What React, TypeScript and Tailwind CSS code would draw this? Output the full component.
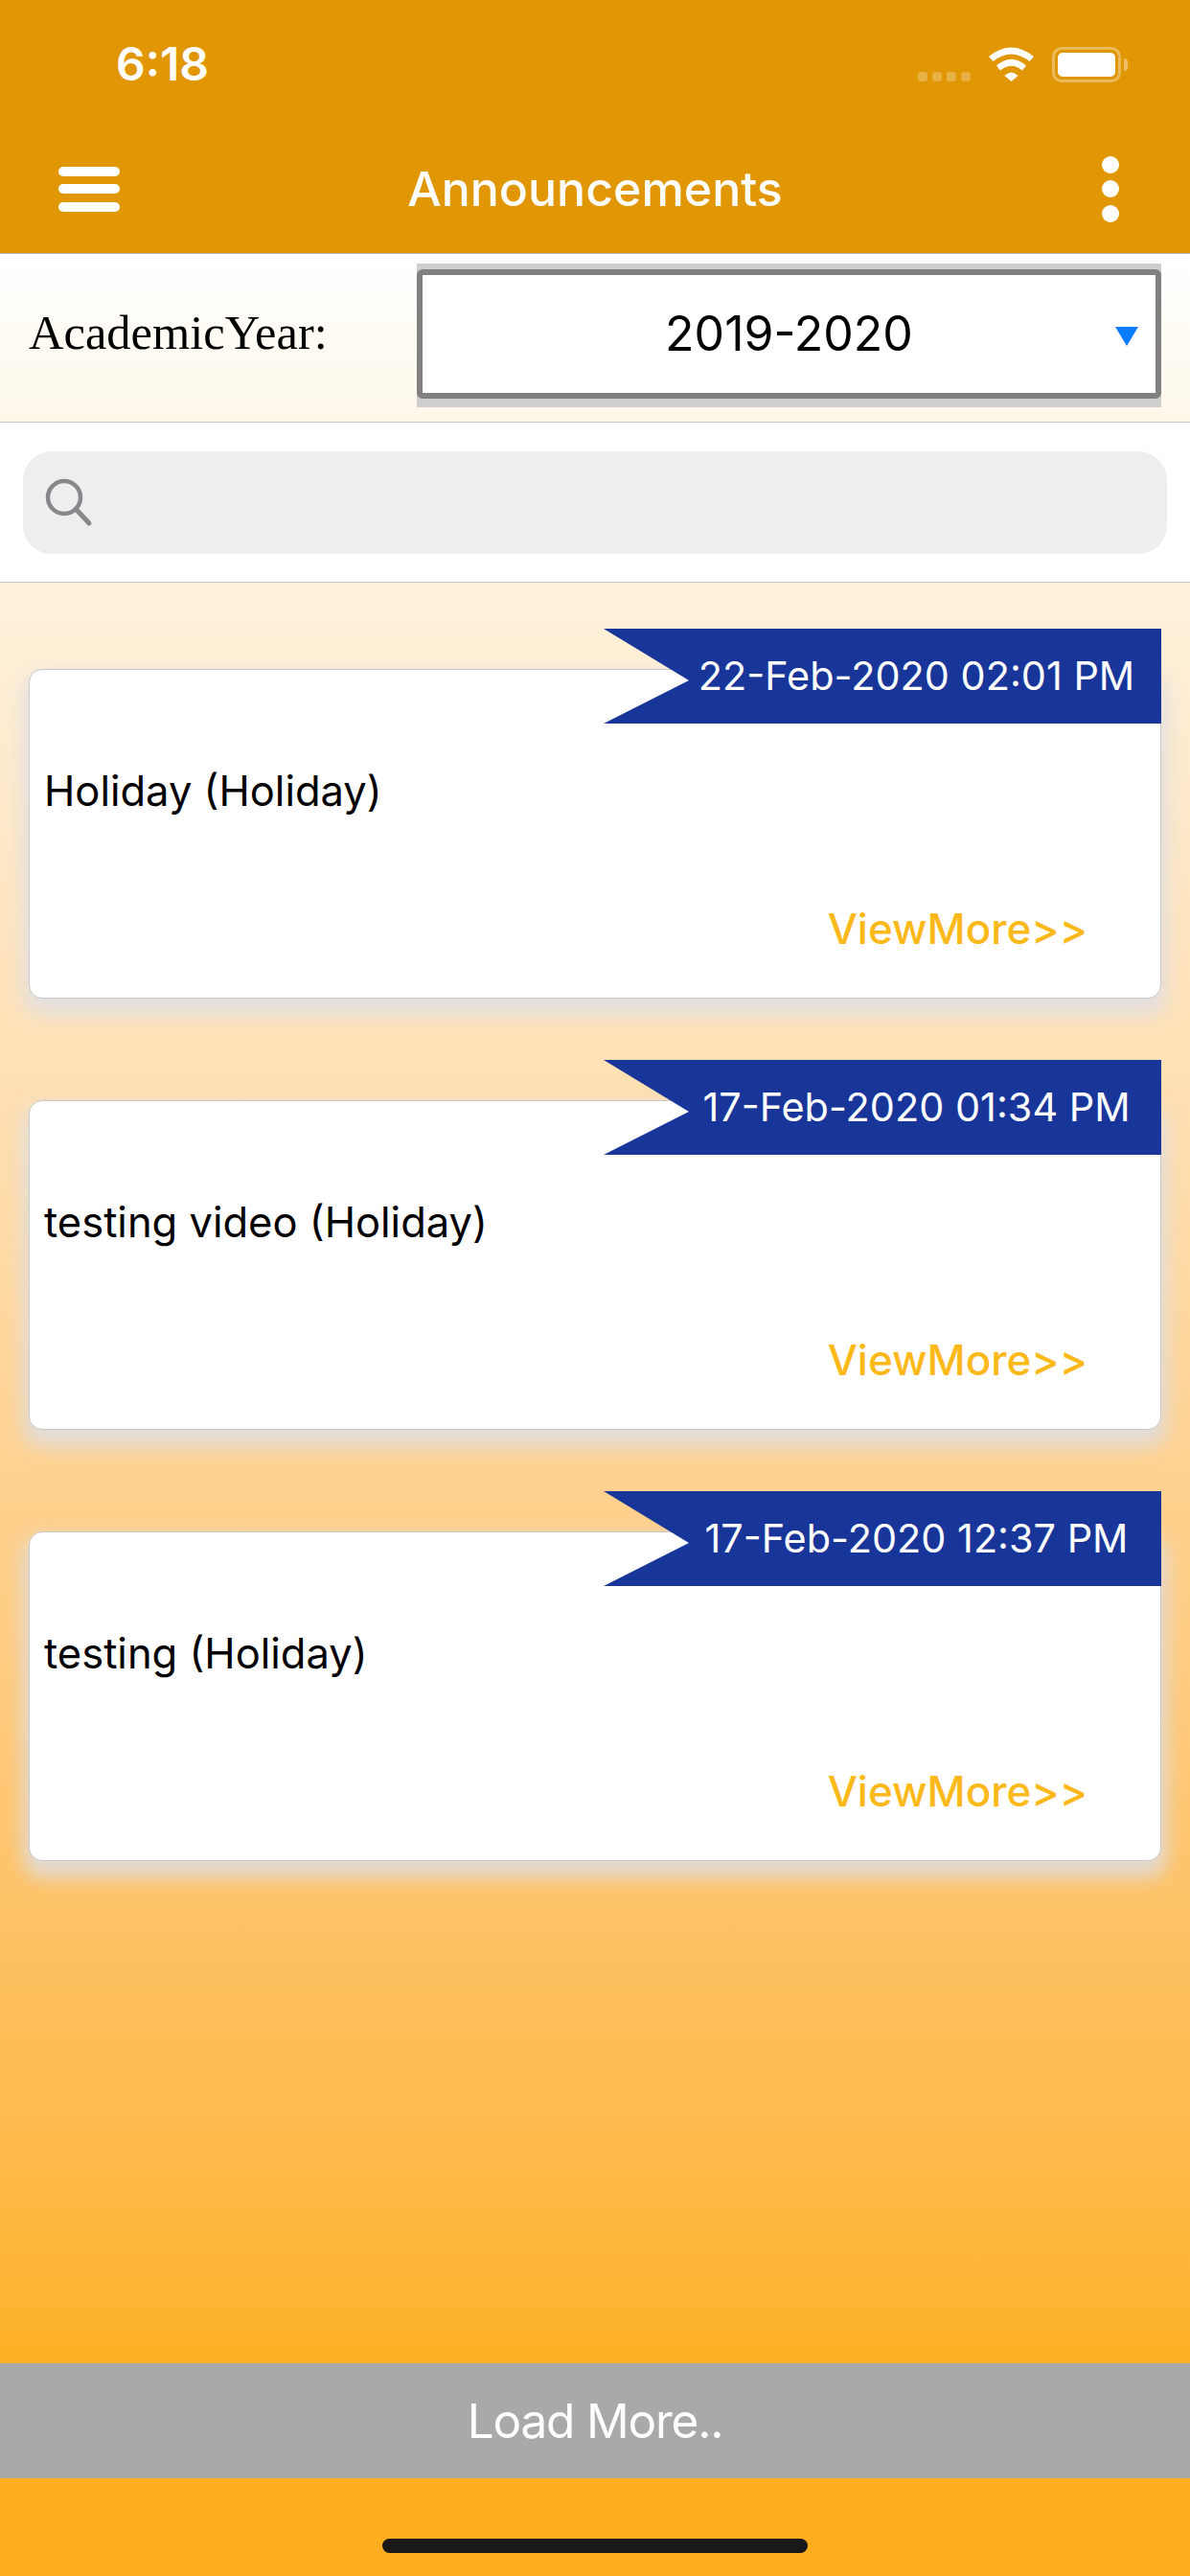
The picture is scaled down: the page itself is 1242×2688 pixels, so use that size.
import React from "react";

const items = [
  { date: "22-Feb-2020 02:01 PM", title: "Holiday (Holiday)" },
  { date: "17-Feb-2020 01:34 PM", title: "testing video (Holiday)" },
  { date: "17-Feb-2020 12:37 PM", title: "testing (Holiday)" },
];

function StatusIcons() {
  return (
    <div className="flex items-start">
      <div className="flex gap-[5px] mt-[26px] mr-[19px]">
        {[0, 1, 2, 3].map((i) => (
          <div key={i} className="w-[10px] h-[10px] rounded-[3px] bg-white/25" />
        ))}
      </div>
      <svg width="47" height="36" viewBox="0 0 47 36" className="mr-[19px]">
        <path d="M0 10 Q23.5 -9 47 10 L42.5 15 Q23.5 0 4.5 15 Z" fill="#fff" />
        <path d="M8 19.5 Q23.5 6 39 19.5 L35 24.5 Q23.5 15 12 24.5 Z" fill="#fff" />
        <path d="M16.5 30 Q23.5 23 30.5 30 L23.5 36 Z" fill="#fff" />
      </svg>
      <div className="w-[72px] h-[37px] rounded-[10px] border-[3px] border-white/35 p-[3px] flex">
        <div className="flex-1 rounded-[5px] bg-white" />
      </div>
      <div className="w-[4px] h-[13px] mt-[12px] ml-[3px] rounded-r-full bg-white/40" />
    </div>
  );
}

function Card({ date, title }: { date: string; title: string }) {
  return (
    <div className="relative mb-[106px] h-[344px] rounded-[14px] border border-[#c9c9c9] bg-white shadow-[0_12px_20px_6px_rgba(222,222,228,0.85)]">
      <div className="absolute top-[-43px] right-[-1px] w-[582px] h-[99px]">
        <svg width="582" height="99" viewBox="0 0 582 99" className="absolute inset-0">
          <polygon points="0,0 582,0 582,99 0,99 89,54" fill="#18359a" />
        </svg>
        <div className="absolute inset-y-0 left-[89px] right-0 flex items-center justify-center pr-[18px] text-[41.4px] text-white">
          {date}
        </div>
      </div>
      <p className="pt-[96px] pl-[15px] text-[43.5px] leading-[60px] text-black">{title}</p>
      <p className="absolute right-[76px] bottom-[46px] text-[44px] leading-[52px] font-medium text-[#fdb91a]">
        ViewMore&gt;&gt;
      </p>
    </div>
  );
}

export default function App() {
  return (
    <div className="w-[1242px] h-[2688px] flex flex-col overflow-hidden font-['Inter',sans-serif]">
      <header className="h-[265px] shrink-0 bg-[#e19704] border-b border-[#b8b8b8] flex flex-col">
        <div className="h-[124px] flex items-start justify-between pt-[49px] pl-[121px] pr-[65px]">
          <span className="text-[48px] leading-[36px] font-semibold text-white">6:18</span>
          <StatusIcons />
        </div>
        <div className="flex-1 grid grid-cols-[1fr_auto_1fr] items-center px-[61px] pt-[6px]">
          <div className="flex flex-col gap-[8.5px] w-[64px]">
            <div className="h-[10px] rounded-full bg-white" />
            <div className="h-[10px] rounded-full bg-white" />
            <div className="h-[10px] rounded-full bg-white" />
          </div>
          <h1 className="text-[50px] font-medium text-white">Announcements</h1>
          <div className="flex flex-col gap-[7.5px] w-[18px] mr-[13px] justify-self-end">
            <div className="h-[18px] rounded-full bg-white" />
            <div className="h-[18px] rounded-full bg-white" />
            <div className="h-[18px] rounded-full bg-white" />
          </div>
        </div>
      </header>

      <div className="h-[176px] shrink-0 flex items-center justify-between pl-[30px] pr-[30px] pb-[5px] bg-gradient-to-b from-white to-[#fef8ea] border-b border-[#c9c4bb]">
        <span className="font-['Liberation_Serif',serif] text-[50.5px] text-black mt-[-4px]">AcademicYear:</span>
        <div className="w-[777px] h-[150px] pt-[6px] bg-[#cfcfcf]">
          <div className="relative h-[135px] rounded-[6px] border-[6px] border-[#808080] bg-white flex items-center justify-center">
            <span className="text-[50px] text-black">2019-2020</span>
            <svg width="24" height="20" viewBox="0 0 24 20" className="absolute right-[18px] top-[54px]">
              <polygon points="0,0 24,0 12,20" fill="#0a7cff" />
            </svg>
          </div>
        </div>
      </div>

      <div className="h-[167px] shrink-0 bg-white border-b border-[#cfc9bd] flex items-center px-[24px]">
        <div className="w-full h-[107px] rounded-[30px] bg-[#eeeeef] flex items-center pl-[22px]">
          <svg width="52" height="52" viewBox="0 0 52 52" fill="none" stroke="#88888c" strokeWidth="4.5">
            <circle cx="21" cy="21" r="17" />
            <path d="M33 33 L47 48" strokeWidth="5" strokeLinecap="round" />
          </svg>
        </div>
      </div>

      <main className="flex-1 px-[30px] pt-[90px] bg-gradient-to-b from-[#fef1dc] to-[#fdb124]">
        {items.map((item) => (
          <Card key={item.date} date={item.date} title={item.title} />
        ))}
      </main>

      <div className="h-[120px] shrink-0 bg-[#a9a9a9] flex items-center justify-center text-[49.5px] tracking-[-1.2px] text-white">
        Load More..
      </div>
      <div className="h-[102px] shrink-0 bg-[#fdaf1f] flex justify-center pt-[63px]">
        <div className="w-[444px] h-[15px] rounded-full bg-[#191919]" />
      </div>
    </div>
  );
}
